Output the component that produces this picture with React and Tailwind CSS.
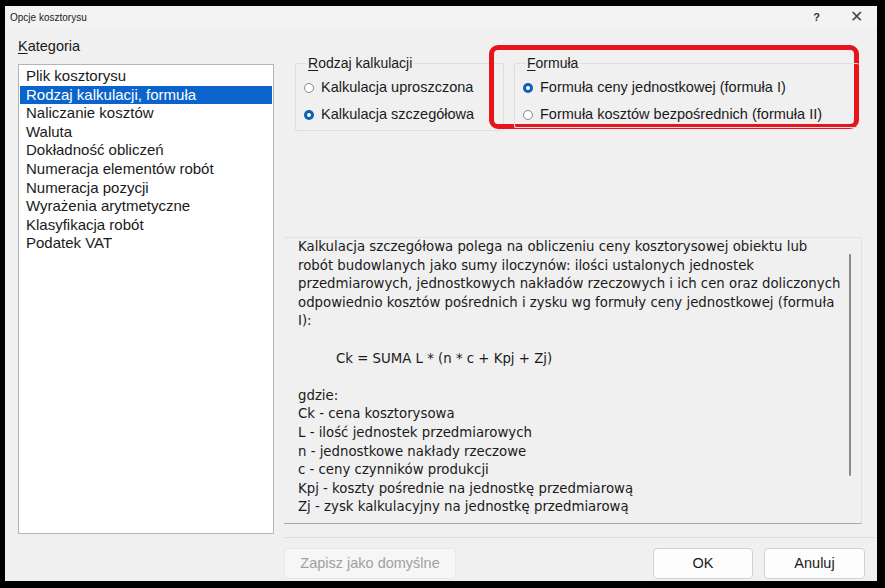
import React from 'react';

const categories = [
  'Plik kosztorysu',
  'Rodzaj kalkulacji, formuła',
  'Naliczanie kosztów',
  'Waluta',
  'Dokładność obliczeń',
  'Numeracja elementów robót',
  'Numeracja pozycji',
  'Wyrażenia arytmetyczne',
  'Klasyfikacja robót',
  'Podatek VAT',
];

const description = [
  'Kalkulacja szczegółowa polega na obliczeniu ceny kosztorysowej obiektu lub',
  'robót budowlanych jako sumy iloczynów: ilości ustalonych jednostek',
  'przedmiarowych, jednostkowych nakładów rzeczowych i ich cen oraz doliczonych',
  'odpowiednio kosztów pośrednich i zysku wg formuły ceny jednostkowej (formuła',
  'I):',
];

const legend = [
  'gdzie:',
  'Ck - cena kosztorysowa',
  'L - ilość jednostek przedmiarowych',
  'n - jednostkowe nakłady rzeczowe',
  'c - ceny czynników produkcji',
  'Kpj - koszty pośrednie na jednostkę przedmiarową',
  'Zj - zysk kalkulacyjny na jednostkę przedmiarową',
];

function Radio({ checked, label }) {
  return (
    <div className="flex items-center h-[27px]">
      {checked ? (
        <span className="w-[10px] h-[10px] rounded-full bg-[#0f5fb8] flex items-center justify-center">
          <span className="w-[4px] h-[4px] rounded-full bg-white" />
        </span>
      ) : (
        <span className="w-[10px] h-[10px] rounded-full border border-[#8a8a8a] bg-white" />
      )}
      <span className="ml-[7px] text-[14.5px] text-[#1a1a1a]">{label}</span>
    </div>
  );
}

function GroupBox({ title, hotkey, className, children }) {
  return (
    <div className={`relative border border-[#dedede] rounded-[2px] ${className}`}>
      <div className="absolute -top-[10px] left-[10px] px-[2px] bg-[#f0f0f0] text-[14px] leading-[18px] text-[#1a1a1a]">
        <span className="underline underline-offset-2">{hotkey}</span>
        {title}
      </div>
      <div className="pt-[10px] pl-[8px]">{children}</div>
    </div>
  );
}

export default function App() {
  return (
    <div
      className="w-[885px] h-[588px] bg-black pl-[5px] pt-[6px]"
      style={{ fontFamily: '"Liberation Sans", Arial, sans-serif' }}
    >
      <div className="w-[872px] h-[575px] bg-[#f0f0f0] flex flex-col">
        {/* title bar */}
        <div className="h-[22px] flex items-center pl-[5px] pr-[14px] bg-[#f3f3f3]">
          <span className="text-[10px] text-[#222]">Opcje kosztorysu</span>
          <span className="ml-auto text-[11px] font-bold text-[#333]">?</span>
          <span className="ml-[30px] text-[16px] leading-none text-[#444]">✕</span>
        </div>

        <div className="flex flex-1">
          {/* left column */}
          <div className="pl-[13px] w-[270px]">
            <div className="mt-[10px] h-[16px] text-[14.5px] leading-[16px] text-[#1a1a1a]">
              <span className="underline underline-offset-2">K</span>ategoria
            </div>
            <div className="mt-[10px] w-[256px] h-[470px] bg-white border border-[#b5b5b5] pt-[2px] pl-[1px] pr-[1px]">
              {categories.map((c, i) => (
                <div
                  key={c}
                  className={`h-[18.6px] leading-[18.6px] text-[15px] pl-[6px] ${
                    i === 1 ? 'bg-[#0a64cc] text-white' : 'text-[#1a1a1a]'
                  }`}
                >
                  {c}
                </div>
              ))}
            </div>
          </div>

          {/* right column */}
          <div className="flex-1 flex flex-col pl-[9px] pr-[10px]">
            <div className="mt-[35px] flex h-[68px]">
              <GroupBox
                title="odzaj kalkulacji"
                hotkey="R"
                className="ml-[11px] w-[209px] h-[68px]"
              >
                <Radio label="Kalkulacja uproszczona" />
                <Radio checked label="Kalkulacja szczegółowa" />
              </GroupBox>

              <div className="relative ml-[-15px] -mt-[18px] w-[370px] h-[84px] border-[5px] border-[#e8141c] rounded-[9px] pt-[13px] pl-[20px]">
                <GroupBox
                  title="ormuła"
                  hotkey="F"
                  className="w-[345px] h-[65px] border-r-0"
                >
                  <Radio checked label="Formuła ceny jednostkowej (formuła I)" />
                  <Radio label="Formuła kosztów bezpośrednich (formuła II)" />
                </GroupBox>
              </div>
            </div>

            {/* description */}
            <div className="mt-[106px] h-[287px] w-[578px] border-t border-[#e2e2e2] border-r border-r-[#e2e2e2] border-b border-b-[#a8a8a8] flex overflow-hidden">
              <div
                className="flex-1 pl-[14px] text-[13.3px] leading-[18.6px] text-[#1a1a1a] whitespace-nowrap"
                style={{ fontFamily: '"DejaVu Sans", Verdana, sans-serif' }}
              >
                {description.map((l) => (
                  <div key={l}>{l}</div>
                ))}
                <div className="h-[18.6px]" />
                <div className="pl-[38px]">Ck = SUMA L * (n * c + Kpj + Zj)</div>
                <div className="h-[18.6px]" />
                {legend.map((l) => (
                  <div key={l}>{l}</div>
                ))}
              </div>
              <div className="w-[12px] shrink-0 pt-[16px]">
                <div className="w-[2px] h-[222px] bg-[#8a8a8a] rounded-full" />
              </div>
            </div>

            <div className="mt-[13px] h-px bg-[#dcdcdc] -mr-[8px]" />

            {/* buttons */}
            <div className="mt-[10px] flex items-center">
              <div className="w-[172px] h-[31px] rounded-[4px] bg-[#f6f6f6] border border-[#e8e8e8] flex items-center justify-center text-[14.5px] text-[#a0a0a0]">
                Zapisz jako domyślne
              </div>
              <div className="ml-auto w-[100px] h-[31px] rounded-[4px] bg-[#fdfdfd] border border-[#d2d2d2] flex items-center justify-center text-[14.5px] text-[#1a1a1a]">
                OK
              </div>
              <div className="ml-[11px] mr-[2px] w-[101px] h-[31px] rounded-[4px] bg-[#fdfdfd] border border-[#d2d2d2] flex items-center justify-center text-[14.5px] text-[#1a1a1a]">
                Anuluj
              </div>
            </div>
          </div>
        </div>
      </div>
    </div>
  );
}
